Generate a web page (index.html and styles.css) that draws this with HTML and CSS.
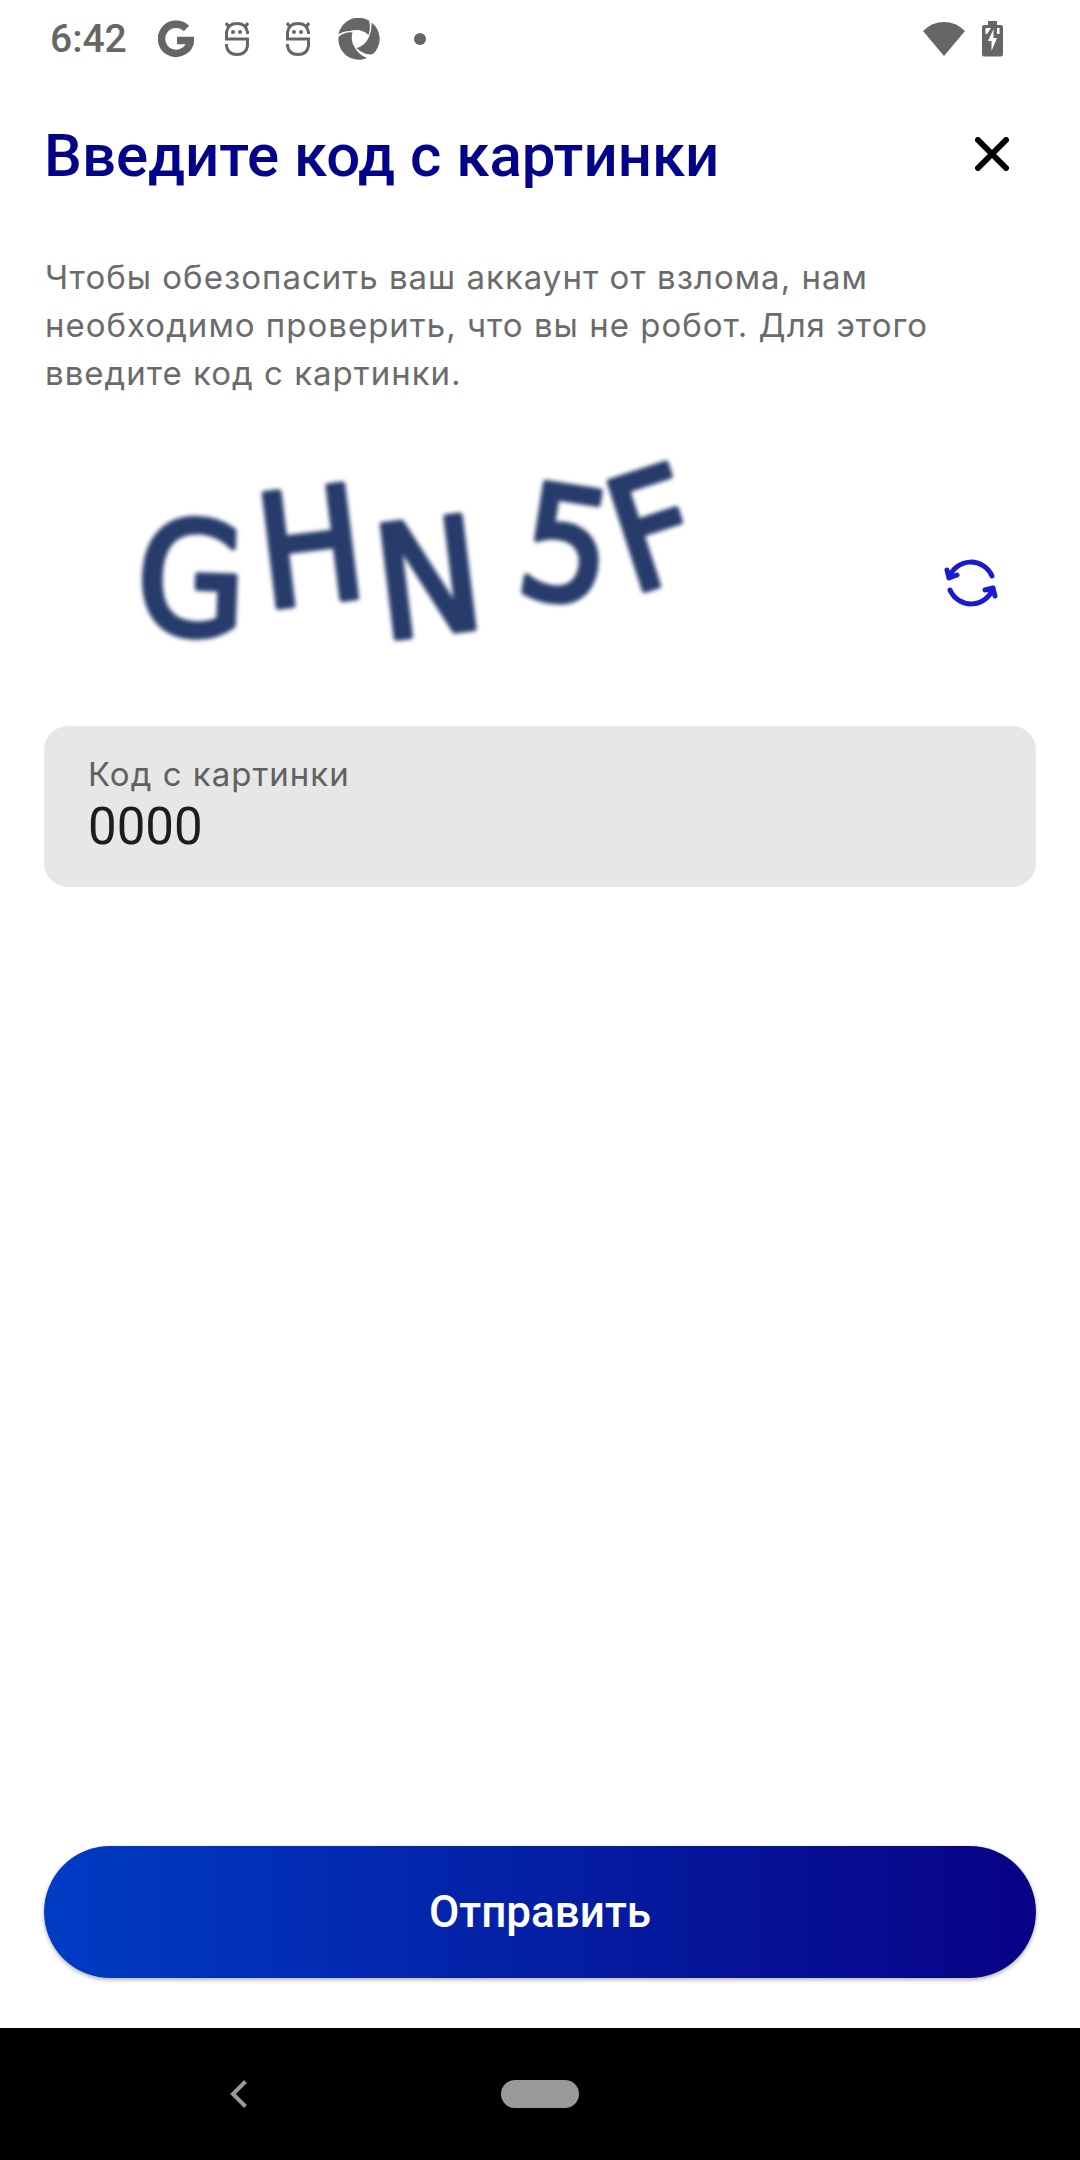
FILE: index.html
```html
<!DOCTYPE html>
<html lang="ru">
<head>
<meta charset="utf-8">
<meta name="viewport" content="width=device-width, initial-scale=1">
<title>Введите код с картинки</title>
<link rel="stylesheet" href="styles.css">
</head>
<body>
<div class="status-bar">
  <span class="clock">6:42</span>
  <div class="notifications">
    <svg class="icon-google" viewBox="0 0 36 38" aria-hidden="true"><path d="M28.5 8.5A14.6 14.6 0 1 0 32.6 20.500H19" fill="none" stroke="#666" stroke-width="7.500"/></svg>
    <svg class="icon-bot" viewBox="0 0 26 36" aria-hidden="true"><g fill="none" stroke="#666" stroke-width="3"><path d="M23.500 13V11Q22 2.500 13 2.500T2.500 11V18H23.500V25Q22 33.500 13 33.500T2.500 25V23"/><path d="M2 2L5 6M24 2L21 6"/></g><circle cx="9" cy="11" r="2" fill="#666"/><circle cx="16" cy="11" r="2" fill="#666"/></svg>
    <svg class="icon-bot" viewBox="0 0 26 36" aria-hidden="true"><g fill="none" stroke="#666" stroke-width="3"><path d="M23.500 13V11Q22 2.500 13 2.500T2.500 11V18H23.500V25Q22 33.500 13 33.500T2.500 25V23"/><path d="M2 2L5 6M24 2L21 6"/></g><circle cx="9" cy="11" r="2" fill="#666"/><circle cx="16" cy="11" r="2" fill="#666"/></svg>
    <svg class="icon-shutter" viewBox="0 0 42 42" aria-hidden="true"><path d="M0.500 16.500A20.500 20.500 0 0 1 31 2.500Q33 10 30.500 17Q23 10 12 13Q5 13 0.500 16.500ZM33.500 4.500A20.500 20.500 0 0 1 35 36Q27 38 18.500 30Q27 28 31 19Q34 12 33.500 4.500ZM0.500 19Q7 13.500 14.500 14.500Q12 23 17 30Q21 37 29 40A20.500 20.500 0 0 1 0.500 19Z" fill="#666"/></svg>
    <svg class="icon-more" viewBox="0 0 12 12" aria-hidden="true"><circle cx="6" cy="6" r="6" fill="#666"/></svg>
  </div>
  <div class="system">
    <svg class="icon-wifi" viewBox="0 0 42 36" aria-hidden="true"><path d="M0 10Q9 1 21 1T42 10L21 35Z" fill="#666"/></svg>
    <svg class="icon-battery" viewBox="0 0 22 36" aria-hidden="true"><path d="M6 0H15V4H19Q21 4 21 6V33Q21 35.500 19 35.500H2Q0 35.500 0 33V6Q0 4 2 4H6Z" fill="#666"/><path d="M3.500 7H9L5 13H3.500ZM15 7H17.500V13H15ZM11.500 8V17H15L9.500 30V20H6Z" fill="#fff"/></svg>
  </div>
</div>

<main class="screen">
  <header class="header">
    <h1 class="title">Введите код с картинки</h1>
    <button class="icon-button" type="button" aria-label="Закрыть">
      <svg class="icon-close" viewBox="0 0 34 34"><path d="M3 3L31 31M31 3L3 31" stroke="#000" stroke-width="6" stroke-linecap="round"/></svg>
    </button>
  </header>
  <p class="description">Чтобы обезопасить ваш аккаунт от взлома, нам необходимо проверить, что вы не робот. Для этого введите код с картинки.</p>

  <form class="form">
    <div class="captcha">
      <svg class="captcha-image" viewBox="0 0 660 220" role="img" aria-label="Код">
        <g class="captcha-ink">
          <text x="93" y="205" transform="rotate(2 137 152)">G</text>
          <text x="214" y="175" transform="rotate(-7 255 120)">H</text>
          <text x="332" y="206" transform="rotate(-7 372 151)">N</text>
          <text x="477" y="170" transform="rotate(9 512 117)">5</text>
          <text x="568" y="157" transform="rotate(-18 604 99)">F</text>
        </g>
      </svg>
      <button class="icon-button captcha-refresh" type="button" aria-label="Обновить картинку">
        <svg class="icon-refresh" viewBox="0 0 54 50"><g fill="none" stroke="#1a1ad2" stroke-width="5" stroke-linecap="round" stroke-linejoin="round"><path d="M48 18A23 23 0 0 0 5 20M3 12L5 20L13 17"/><path d="M6 32A23 23 0 0 0 49 30M41 32L49 30L51 38"/></g></svg>
      </button>
    </div>
    <div class="field">
      <label class="field-label" for="code">Код с картинки</label>
      <input class="field-input" id="code" type="text" value="0000">
    </div>
    <button class="submit" type="submit">Отправить</button>
  </form>
</main>

<nav class="nav-bar">
  <button class="nav-back" type="button" aria-label="Назад"><svg class="icon-back" viewBox="0 0 18 28"><path d="M15.500 1.500L3 14L15.500 26.500" fill="none" stroke="#999" stroke-width="4"/></svg></button>
  <button class="nav-home" type="button" aria-label="Домой"></button>
</nav>
</body>
</html>
```
FILE: styles.css
```css
* {
  box-sizing: border-box;
}

body {
  margin: 0;
  min-height: 100vh;
  display: flex;
  flex-direction: column;
  background: #fff;
  font-family: Inter, "Noto Sans", sans-serif;
}

button {
  padding: 0;
  border: 0;
  background: none;
  cursor: pointer;
}

svg {
  display: block;
}

.status-bar {
  height: 78px;
  padding: 0 76px 0 50px;
  display: flex;
  align-items: center;
  color: #666;
}

.clock {
  min-width: 95px;
  font: 500 39px/40px Roboto, sans-serif;
}

.notifications {
  display: grid;
  grid-auto-flow: column;
  grid-auto-columns: 61px;
  place-items: center;
}

.system {
  margin-left: auto;
  display: flex;
  align-items: center;
  gap: 17px;
}

.icon-google {
  width: 36px;
  height: 38px;
}

.icon-bot {
  width: 26px;
  height: 36px;
}

.icon-shutter {
  width: 42px;
  height: 42px;
}

.icon-more {
  width: 12px;
  height: 12px;
}

.icon-wifi {
  width: 42px;
  height: 36px;
}

.icon-battery {
  width: 22px;
  height: 36px;
}

.screen {
  flex: 1;
  display: flex;
  flex-direction: column;
  padding: 32px 44px 50px;
}

.header {
  display: flex;
  align-items: flex-start;
  justify-content: space-between;
}

.title {
  margin: 0;
  color: #030389;
  font: 500 60px/92px Roboto, sans-serif;
}

.icon-button {
  width: 88px;
  height: 88px;
  display: grid;
  place-items: center;
}

.icon-close {
  width: 34px;
  height: 34px;
}

.description {
  margin: 51px 44px 0 0;
  padding-left: 1px;
  color: #6b6b6b;
  font-size: 33px;
  line-height: 48px;
  letter-spacing: 1px;
}

.form {
  flex: 1;
  display: flex;
  flex-direction: column;
}

.captcha {
  margin-top: 32px;
  padding-right: 21px;
  display: flex;
  align-items: flex-end;
  justify-content: space-between;
}

.captcha-image {
  width: 660px;
  height: 220px;
  overflow: visible;
}

.captcha-ink {
  fill: #283c6c;
  stroke: #283c6c;
  stroke-width: 6px;
  stroke-linejoin: round;
  font-family: "DejaVu Sans Condensed", "DejaVu Sans", sans-serif;
  font-size: 156px;
  filter: blur(2px);
}

.captcha-refresh {
  margin-bottom: 22px;
}

.icon-refresh {
  width: 54px;
  height: 50px;
}

.field {
  margin-top: 77px;
  padding: 24px 44px 31px;
  display: flex;
  flex-direction: column;
  border-radius: 24px;
  background: #e7e7e7;
}

.field-label {
  color: #616161;
  font-size: 33px;
  line-height: 48px;
  letter-spacing: 1px;
}

.field-input {
  width: 100%;
  height: 58px;
  padding: 0;
  border: 0;
  outline: 0;
  background: none;
  color: #1d1d1d;
  font: 400 51px/58px Roboto, sans-serif;
}

.submit {
  margin-top: auto;
  height: 132px;
  border-radius: 66px;
  background: linear-gradient(90deg, #003cc4, #080285);
  box-shadow: 0 2px 4px rgba(0, 0, 0, 0.3);
  color: #fff;
  font: 500 44px/56px Roboto, sans-serif;
}

.nav-bar {
  height: 132px;
  display: grid;
  grid-template-columns: 1fr 78px 1fr;
  align-items: center;
  background: #000;
}

.nav-back {
  width: 88px;
  height: 88px;
  margin-right: 24px;
  display: grid;
  place-items: center;
  justify-self: center;
}

.icon-back {
  width: 18px;
  height: 28px;
}

.nav-home {
  height: 28px;
  border-radius: 14px;
  background: #999;
}
```
